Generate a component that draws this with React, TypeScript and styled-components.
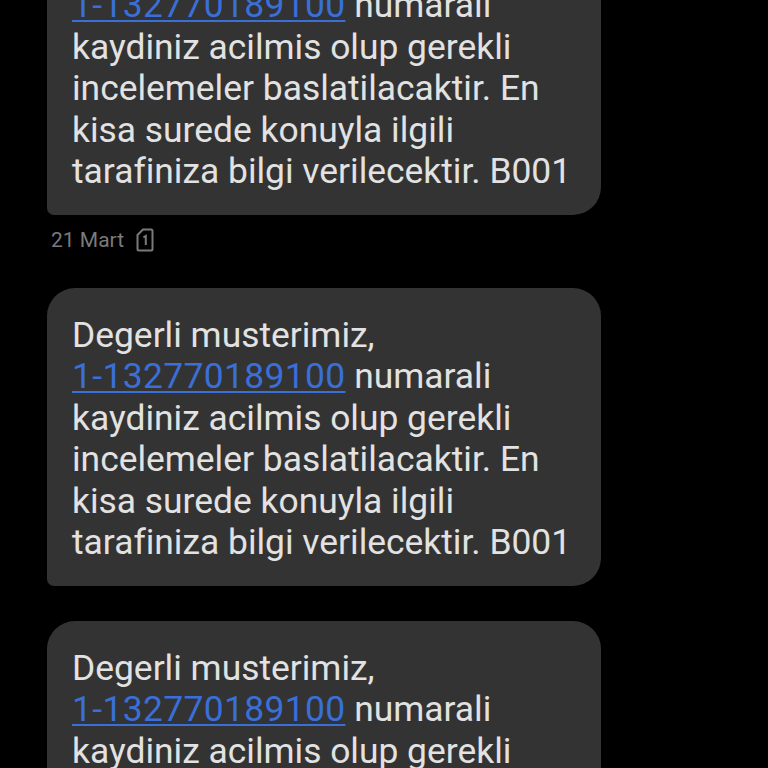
import React from 'react';
import styled, { createGlobalStyle } from 'styled-components';

const GlobalStyle = createGlobalStyle`
    html, body {
        margin: 0;
        height: 768px;
        overflow: hidden;
        background: #000;
    }
`;

const Thread = styled.div`
    display: flex;
    flex-direction: column;
    align-items: flex-start;
    margin-top: -83px;
    padding-left: 47px;
    font-family: Roboto, "Noto Sans", sans-serif;
`;

const Group = styled.div`
    display: flex;
    flex-direction: column;
    margin-bottom: ${(props: { $gap: number }) => props.$gap}px;
`;

const Bubble = styled.div`
    box-sizing: border-box;
    width: 554px;
    height: 298px;
    padding: 26.5px 25px 0;
    background: #333333;
    border-radius: 28px 28px 28px 7px;
    color: #e2e2e2;
    font-size: 35.4px;
    font-variant-ligatures: none;
    line-height: 41.6px;
    white-space: nowrap;
`;

const Ref = styled.a`
    color: #3a6fd8;
    letter-spacing: 0.36px;
    text-decoration: underline;
    text-decoration-thickness: 2px;
    text-underline-offset: 3px;
`;

const Meta = styled.div`
    display: flex;
    align-items: center;
    gap: 12px;
    height: 50px;
    padding-left: 4px;
    color: #7a7a7a;
    font-size: 21px;
`;

const SimIcon = () => (
    <svg width="18" height="24" viewBox="0 0 18 24" fill="none">
        <path d="M7 1.5h8a1.5 1.5 0 0 1 1.5 1.5v18a1.5 1.5 0 0 1-1.5 1.5H3A1.5 1.5 0 0 1 1.5 21V7z" stroke="#7a7a7a" strokeWidth="2" />
        <path d="M7.4 9.4 9.8 8v9" stroke="#7a7a7a" strokeWidth="2" />
    </svg>
);

const Message = () => (
    <Bubble>
        Degerli musterimiz,
        <br />
        <Ref>1-132770189100</Ref> numarali
        <br />
        kaydiniz acilmis olup gerekli
        <br />
        incelemeler baslatilacaktir. En
        <br />
        kisa surede konuyla ilgili
        <br />
        tarafiniza bilgi verilecektir. B001
    </Bubble>
);

const App = () => {
    return (
        <>
            <GlobalStyle />
            <Thread>
                <Group $gap={23}>
                    <Message />
                    <Meta>
                        21 Mart
                        <SimIcon />
                    </Meta>
                </Group>
                <Group $gap={35}>
                    <Message />
                </Group>
                <Group $gap={0}>
                    <Message />
                </Group>
            </Thread>
        </>
    );
}

export default App;
